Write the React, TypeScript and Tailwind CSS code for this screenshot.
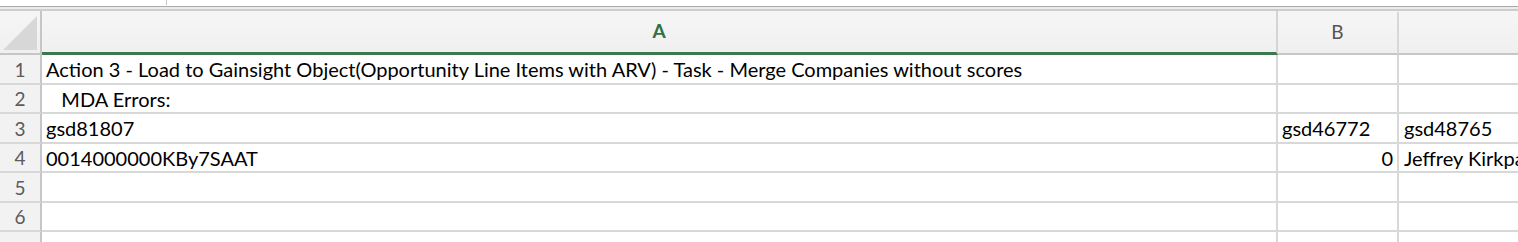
const rows: { n: number; a: string; b?: string; bRight?: boolean; c?: string; h: string }[] = [
    { n: 1, a: 'Action 3 - Load to Gainsight Object(Opportunity Line Items with ARV) - Task - Merge Companies without scores', h: 'h-[30px]' },
    { n: 2, a: '\u00a0\u00a0 MDA Errors:', h: 'h-[29px]' },
    { n: 3, a: 'gsd81807', b: 'gsd46772', c: 'gsd48765', h: 'h-[30px]' },
    { n: 4, a: '0014000000KBy7SAAT', b: '0', bRight: true, c: 'Jeffrey Kirkpatrick', h: 'h-[29px]' },
    { n: 5, a: '', h: 'h-[30px]' },
    { n: 6, a: '', h: 'h-[29px]' },
]

export default function App() {
    return (
        <div
            className="w-[1518px] h-[242px] overflow-hidden bg-white text-black"
            style={{ fontFamily: 'Lato, "Open Sans", sans-serif' }}
        >
            {/* toolbar remnant */}
            <div className="h-[6px] flex">
                <div className="w-[166px]" />
                <div className="w-px h-[5px] bg-[#c4c4c4]" />
            </div>
            <div className="h-px bg-[#a9a9a9]" />
            <div className="h-[2px] bg-[#ececec]" />
            <div className="h-[2px] bg-[#cdcdcd]" />

            {/* column headers */}
            <div className="flex h-[44px] bg-gradient-to-b from-[#f6f6f6] to-[#efefef]">
                <div className="w-[42px] shrink-0 border-r-2 border-b-2 border-[#c6c6c6] relative">
                    <div className="absolute right-[3px] bottom-[3px] w-0 h-0 border-l-[34px] border-l-transparent border-b-[34px] border-b-[#d7d7d7]" />
                </div>
                <div className="w-[1236px] shrink-0 border-r-2 border-r-[#d4d4d4] border-b-[3px] border-b-[#3b7a4c] flex items-center justify-center text-[19px] font-bold text-[#2f7143]">
                    A
                </div>
                <div className="w-[121px] shrink-0 border-r-2 border-r-[#d8d8d8] border-b-2 border-b-[#c6c6c6] mt-px flex items-center justify-center text-[19px] text-[#555]">
                    B
                </div>
                <div className="flex-1 border-b-2 border-b-[#c6c6c6] mt-px" />
            </div>

            {/* grid rows */}
            {rows.map((r) => (
                <div key={r.n} className={`flex ${r.h} text-[20px] leading-none`}>
                    <div className="w-[42px] shrink-0 bg-[#f2f2f2] border-r-2 border-r-[#c6c6c6] border-b-2 border-b-[#d8d8d8] flex items-center justify-center text-[19px] text-[#5b5b5b]">
                        {r.n}
                    </div>
                    <div className="w-[1236px] shrink-0 border-r-2 border-b-2 border-[#d8d8d8] flex items-center pl-[4px] whitespace-pre overflow-hidden">
                        {r.a}
                    </div>
                    <div className={`w-[121px] shrink-0 border-r-2 border-b-2 border-[#d8d8d8] flex items-center px-[4px] whitespace-nowrap overflow-hidden ${r.bRight ? 'justify-end' : ''}`}>
                        {r.b}
                    </div>
                    <div className="flex-1 border-b-2 border-[#d8d8d8] flex items-center pl-[5px] whitespace-nowrap overflow-hidden">
                        {r.c}
                    </div>
                </div>
            ))}

            {/* partial row 7 */}
            <div className="flex h-[20px]">
                <div className="w-[42px] shrink-0 bg-[#f2f2f2] border-r-2 border-r-[#c6c6c6]" />
                <div className="w-[1236px] shrink-0 border-r-2 border-[#d8d8d8]" />
                <div className="w-[121px] shrink-0 border-r-2 border-[#d8d8d8]" />
                <div className="flex-1" />
            </div>
        </div>
    )
}
